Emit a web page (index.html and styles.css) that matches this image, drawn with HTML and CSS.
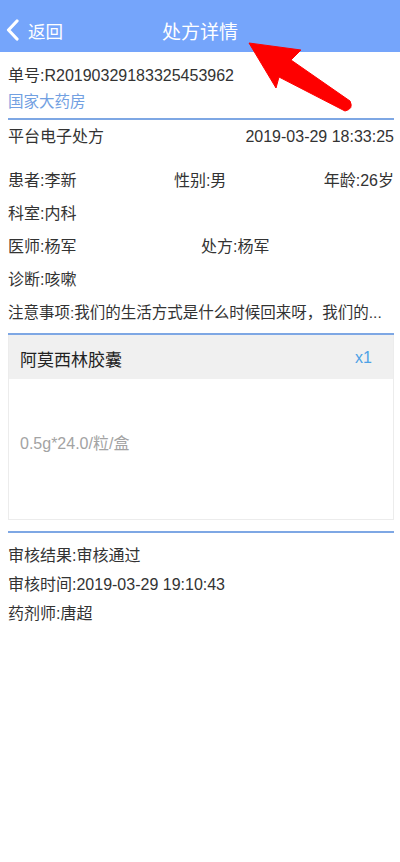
FILE: index.html
```html
<!DOCTYPE html>
<html lang="zh-CN">
<head>
  <meta charset="UTF-8">
  <meta name="viewport" content="width=device-width, initial-scale=1.0">
  <title>处方详情</title>
  <link rel="stylesheet" href="styles.css">
</head>
<body>
  <header class="nav">
    <a class="nav-back" href="#">
      <svg class="chevron" width="14" height="22" viewBox="0 0 14 22">
        <polyline points="11,2 2.5,11 11,20" fill="none" stroke="#fff" stroke-width="3.2" stroke-linecap="round" stroke-linejoin="round"/>
      </svg>
      <span>返回</span>
    </a>
    <h1 class="nav-title">处方详情</h1>
    <span></span>
  </header>

  <svg class="pointer" width="400" height="130" viewBox="0 0 400 130">
    <path d="M249,43 L301,50 L291,60 L350,101 Q354,109 345,111 L279,77 L276,88 Z" fill="#fe0000" stroke="#fe0000" stroke-width="1" stroke-linejoin="round"/>
  </svg>

  <main class="content">
    <div class="order-no">单号:R20190329183325453962</div>
    <div class="shop">国家大药房</div>
    <div class="rule"></div>

    <div class="row row-split">
      <span>平台电子处方</span>
      <span>2019-03-29 18:33:25</span>
    </div>
    <div class="row row-split patient">
      <span>患者:李新</span>
      <span>性别:男</span>
      <span>年龄:26岁</span>
    </div>
    <div class="row">科室:内科</div>
    <div class="row row-half">
      <span>医师:杨军</span>
      <span>处方:杨军</span>
    </div>
    <div class="row">诊断:咳嗽</div>
    <div class="row row-clip">注意事项:我们的生活方式是什么时候回来呀，我们的...</div>
    <div class="rule rule-notes"></div>

    <div class="drug">
      <div class="drug-head">
        <span class="drug-name">阿莫西林胶囊</span>
        <span class="drug-qty">x1</span>
      </div>
      <div class="drug-body">0.5g*24.0/粒/盒</div>
    </div>
    <div class="rule rule-audit"></div>

    <div class="audit">
      <div class="audit-row">审核结果:审核通过</div>
      <div class="audit-row">审核时间:2019-03-29 19:10:43</div>
      <div class="audit-row">药剂师:唐超</div>
    </div>
  </main>
</body>
</html>
```

FILE: styles.css
```css
* {
  box-sizing: border-box;
}
body {
  margin: 0;
  background: #fff;
  color: #333;
  font-family: 'Liberation Sans', 'Noto Sans CJK SC', sans-serif;
  font-size: 16px;
}
.nav {
  display: grid;
  grid-template-columns: 1fr auto 1fr;
  align-items: center;
  height: 52px;
  padding: 8px 6px 0;
  background: #75a5fb;
  color: #fff;
}
.nav-back {
  display: flex;
  align-items: center;
  gap: 8px;
  color: #fff;
  text-decoration: none;
  font-size: 17.5px;
}
.nav-title {
  margin: 0;
  font-size: 19px;
  font-weight: 400;
}
.pointer {
  position: absolute;
  top: 0;
  left: 0;
  pointer-events: none;
}
.content {
  padding: 11px 6px 0 8px;
}
.order-no {
  line-height: 26px;
}
.shop {
  line-height: 26px;
  font-size: 15.5px;
  color: #72a0e2;
}
.rule {
  height: 2px;
  margin-top: 3px;
  background: #7ea7e4;
}
.rule-notes {
  margin-top: 4px;
}
.rule-audit {
  margin-top: 11px;
}
.row {
  line-height: 33px;
}
.row-split {
  display: flex;
  justify-content: space-between;
}
.patient {
  margin-top: 11px;
}
.row-half {
  display: grid;
  grid-template-columns: 1fr 1fr;
}
.row-clip {
  white-space: nowrap;
  overflow: hidden;
  font-size: 15.5px;
}
.drug {
  border: 1px solid #ececec;
  border-top: none;
}
.drug-head {
  display: flex;
  justify-content: space-between;
  align-items: center;
  height: 44px;
  padding: 2px 21px 0 11px;
  background: #f0f0f0;
}
.drug-name {
  font-size: 17px;
  color: #222;
}
.drug-qty {
  color: #4da2e6;
}
.drug-body {
  padding: 53px 11px 63px;
  line-height: 24px;
  color: #a3a3a3;
}
.audit {
  margin-top: 8px;
}
.audit-row {
  line-height: 29px;
}
```
